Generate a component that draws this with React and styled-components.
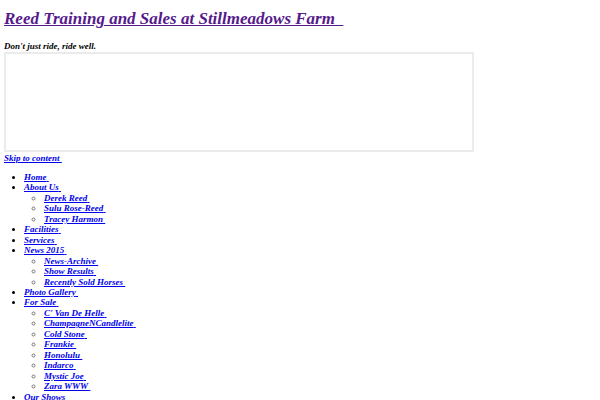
import React from "react";
import styled, { createGlobalStyle } from "styled-components";

const Global = createGlobalStyle`
  html, body { margin: 0; padding: 0; background: #fff; }
  body {
    font-family: "Liberation Serif", serif;
    font-weight: 700;
    font-style: italic;
  }
`;

const Page = styled.div`
  padding: 0 4px;
`;

const Title = styled.h1`
  margin: 0;
  padding-top: 8px;
  font-size: 17px;
  line-height: 22px;
  font-weight: 700;
  a { color: #551a8b; }
`;

const Tagline = styled.h2`
  margin: 11px 0 0;
  font-size: 9px;
  line-height: 10px;
  color: #000;
`;

const Frame = styled.div`
  box-sizing: border-box;
  width: 470px;
  height: 100px;
  border: 2px solid #ebebeb;
  margin-top: 1px;
`;

const Skip = styled.a`
  display: block;
  margin-top: 1px;
  font-size: 9px;
  line-height: 11px;
  color: #0000ee;
`;

const Menu = styled.ul`
  margin: ${(p) => (p.$sub ? "0" : "8px 0 0")};
  padding-left: 20px;
  list-style: ${(p) => (p.$sub ? "circle" : "disc")};
  font-size: 9px;
  line-height: 10.45px;
  li::marker { color: ${(p) => (p.$sub ? "#777" : "#000")}; }
  a { color: #0000ee; }
`;

const menu = [
  { t: "Home" },
  { t: "About Us", c: ["Derek Reed", "Sulu Rose-Reed", "Tracey Harmon"] },
  { t: "Facilities" },
  { t: "Services" },
  { t: "News 2015", c: ["News-Archive", "Show Results", "Recently Sold Horses"] },
  { t: "Photo Gallery" },
  {
    t: "For Sale",
    c: ["C' Van De Helle", "ChampagneNCandlelite", "Cold Stone", "Frankie", "Honolulu", "Indarco", "Mystic Joe", "Zara WWW"],
  },
  { t: "Our Shows" },
];

export default function App() {
  return (
    <Page>
      <Global />
      <Title><a href="#">Reed Training and Sales at Stillmeadows Farm&nbsp;&nbsp;</a></Title>
      <Tagline>Don't just ride, ride well.</Tagline>
      <Frame />
      <Skip href="#">Skip to content&nbsp;</Skip>
      <Menu>
        {menu.map((m) => (
          <li key={m.t}>
            <a href="#">{m.t}&nbsp;</a>
            {m.c && (
              <Menu $sub>
                {m.c.map((s) => (
                  <li key={s}><a href="#">{s}&nbsp;</a></li>
                ))}
              </Menu>
            )}
          </li>
        ))}
      </Menu>
    </Page>
  );
}
